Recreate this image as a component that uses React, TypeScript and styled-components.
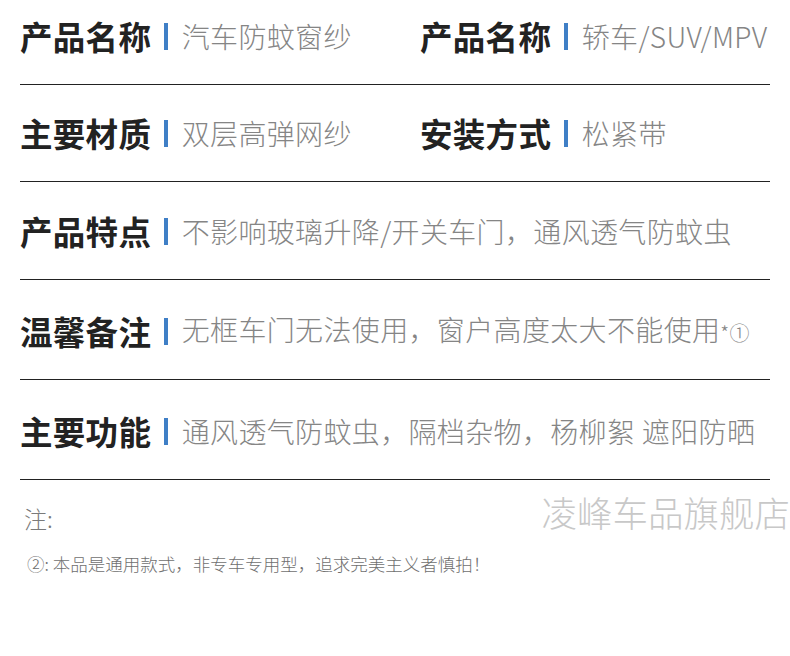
import React from 'react'
import styled, { createGlobalStyle } from 'styled-components'

const GlobalStyle = createGlobalStyle`
  body {
    margin: 0;
    background: #ffffff;
    font-family: 'Noto Sans CJK SC', 'Noto Sans', sans-serif;
  }
`

const specs = [
  {
    top: 16,
    cells: [
      { label: '产品名称', value: '汽车防蚊窗纱' },
      { label: '产品名称', value: '轿车/SUV/MPV' },
    ],
  },
  {
    top: 28,
    cells: [
      { label: '主要材质', value: '双层高弹网纱' },
      { label: '安装方式', value: '松紧带' },
    ],
  },
  { top: 29, cells: [{ label: '产品特点', value: '不影响玻璃升降/开关车门，通风透气防蚊虫' }] },
  { top: 31, cells: [{ label: '温馨备注', value: '无框车门无法使用，窗户高度太大不能使用', mark: '*①' }] },
  { top: 31, cells: [{ label: '主要功能', value: '通风透气防蚊虫，隔档杂物，杨柳絮 遮阳防晒' }] },
]

export default function App() {
  return (
    <>
      <GlobalStyle />
      <Page>
        {specs.map((row, i) => (
          <Row key={i} $top={row.top}>
            {row.cells.map((cell, j) => (
              <Cell key={j} $first={j === 0 && row.cells.length > 1}>
                <Label>{cell.label}</Label>
                <Bar />
                <Value>
                  {cell.value}
                  {'mark' in cell && <Mark>{cell.mark}</Mark>}
                </Value>
              </Cell>
            ))}
          </Row>
        ))}
        <NoteRow>
          <NoteTitle>注:</NoteTitle>
          <Watermark>凌峰车品旗舰店</Watermark>
        </NoteRow>
        <Footnote>②: 本品是通用款式，非专车专用型，追求完美主义者慎拍！</Footnote>
      </Page>
    </>
  )
}

const Page = styled.div`
  width: 790px;
  height: 656px;
  padding: 0 0 0 20px;
  box-sizing: border-box;
  overflow: hidden;
`

const Row = styled.div<{ $top: number }>`
  width: 750px;
  display: flex;
  align-items: center;
  padding: ${(p) => p.$top}px 0 28px;
  border-bottom: 1px solid #222222;
`

const Cell = styled.div<{ $first: boolean }>`
  display: flex;
  align-items: center;
  height: 40px;
  width: ${(p) => (p.$first ? '400px' : 'auto')};
`

const Label = styled.div`
  font-size: 32.5px;
  font-weight: 700;
  color: #222222;
  line-height: 40px;
  letter-spacing: 0.3px;
`

const Bar = styled.div`
  width: 3.5px;
  height: 27px;
  background: #3f7fc6;
  margin: 0 14px 0 13px;
`

const Value = styled.div`
  font-size: 28px;
  font-weight: 300;
  color: #858585;
  line-height: 40px;
  letter-spacing: 0.35px;
  white-space: nowrap;
`

const Mark = styled.span`
  font-size: 20px;
`

const NoteRow = styled.div`
  display: flex;
  justify-content: space-between;
  align-items: center;
  height: 63px;
`

const NoteTitle = styled.div`
  font-size: 23px;
  font-weight: 300;
  color: #7a7a7a;
  margin: 12px 0 0 4px;
`

const Watermark = styled.div`
  font-size: 35.5px;
  font-weight: 300;
  color: #c8c8c8;
  line-height: 44px;
`

const Footnote = styled.div`
  font-size: 17.5px;
  font-weight: 300;
  color: #6f6f6f;
  line-height: 24px;
  margin: 9px 0 0 7px;
`
